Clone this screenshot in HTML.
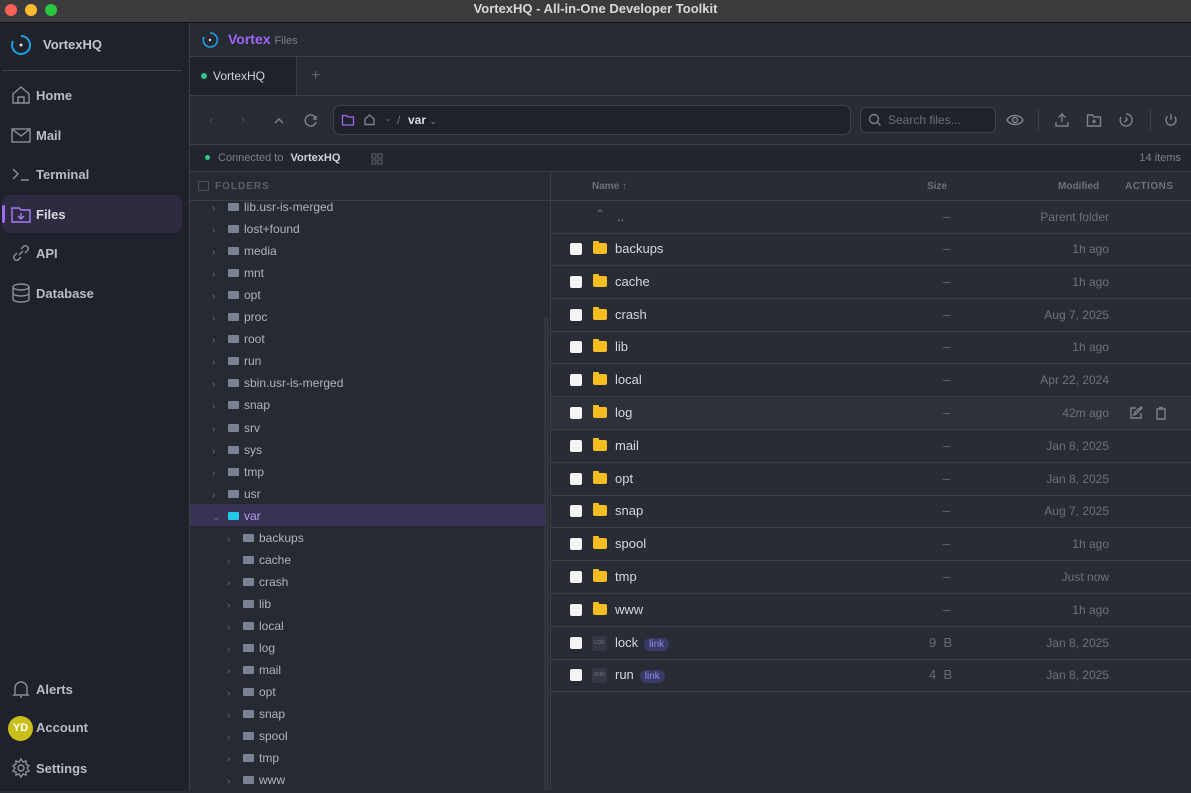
<!DOCTYPE html>
<html><head><meta charset="utf-8"><style>
*{box-sizing:border-box;margin:0;padding:0}
body{width:1191px;height:791px;overflow:hidden;background:#282c35;font-family:"Liberation Sans",sans-serif;color:#c9ccd3;position:relative;font-size:12px}
.a{position:absolute}
#tb{left:0;top:0;width:1191px;height:23px;background:#3b3b3d;border-bottom:1px solid #111;text-align:center;font-weight:bold;color:#d8d8d8;font-size:13px;line-height:18px}
.dot{position:absolute;top:4px;width:12px;height:12px;border-radius:50%}
#sb{left:0;top:23px;width:190px;height:768px;background:#1f222a;border-right:1px solid #3a3e48}
.nav{position:absolute;left:10px;font-weight:bold;font-size:13px;color:#b9bcc4;display:flex;align-items:center;gap:4px}
.nav svg{width:22px;height:22px;fill:none;stroke:#8c909a;stroke-width:1.4}
.tr{position:absolute;height:22px;line-height:22px;font-size:12px;color:#b0b4bc;white-space:nowrap}
.tr .c{display:inline-block;width:16px;color:#6b6f78;font-size:10px}
.tr .f{display:inline-block;width:11px;height:8px;background:#7a8294;border-radius:1px;margin-right:5px;vertical-align:-0px}
.row{position:absolute;left:551px;width:640px;height:33px;border-bottom:1px solid #3a3e48;font-size:13px}
.cb{position:absolute;left:19px;top:10px;width:12px;height:12px;background:#f4f4f4;border-radius:2px}
.fo{position:absolute;left:42px;top:10px;width:14px;height:11px;background:#f5bd1f;border-radius:2px}
.fo:before{content:"";position:absolute;left:0;top:-2px;width:6px;height:3px;background:#f5bd1f;border-radius:1px}
.nm{position:absolute;left:64px;top:8px;color:#d5d8de}
.sz{position:absolute;left:392px;top:8px;color:#666a73}
.md{position:absolute;right:82px;top:9px;color:#6d717a;font-size:12px}
.lk{display:inline-block;background:#3a3a66;color:#8b8ff0;font-size:10px;border-radius:8px;padding:1px 5px;margin-left:6px}
.ti{position:absolute;left:41px;top:9px;width:15px;height:15px;background:#343844;border-radius:2px;color:#777;font-size:5px;line-height:15px;text-align:center}
.ic{stroke:#7d818b;fill:none;stroke-width:1.4}
</style></head><body>
<div id="tb" class="a">VortexHQ - All-in-One Developer Toolkit
<div class="dot" style="left:5px;background:#fe5f57"></div><div class="dot" style="left:25px;background:#febc2e"></div><div class="dot" style="left:45px;background:#28c840"></div></div>

<div id="sb" class="a">
<svg class="a" style="left:10px;top:11px" width="22" height="22" viewBox="0 0 22 22"><path d="M11 2a9 9 0 1 1-8 5" stroke="#1ea0e0" stroke-width="2" fill="none"/><circle cx="11" cy="11" r="1.5" fill="#e0e0e0"/></svg>
<div class="a" style="left:43px;top:14px;font-weight:bold;font-size:13px;color:#c3c6cc">VortexHQ</div>
<div class="a" style="left:2px;top:47px;width:180px;height:1px;background:#3d414b"></div>
<div class="nav" style="top:61px"><svg viewBox="0 0 22 22"><path d="M3 10l8-7 8 7v9H3z M8 19v-6h6v6"/></svg>Home</div>
<div class="nav" style="top:101px"><svg viewBox="0 0 22 22"><rect x="2" y="5" width="18" height="13"/><path d="M2 5l9 7 9-7"/></svg>Mail</div>
<div class="nav" style="top:140px"><svg viewBox="0 0 22 22"><path d="M3 6l5 5-5 5M11 17h8"/></svg>Terminal</div>
<div class="a" style="left:2px;top:172px;width:180px;height:38px;background:#2e2a40;border-radius:8px"></div>
<div class="a" style="left:2px;top:182px;width:3px;height:18px;background:#9b6cf0;border-radius:2px"></div>
<div class="nav" style="top:180px;color:#d8d8e0"><svg viewBox="0 0 22 22" style="stroke:#a77cf5"><path d="M2 5h7l2 2h9v12H2z M11 10v6M8 13l3 3 3-3"/></svg>Files</div>
<div class="nav" style="top:219px"><svg viewBox="0 0 22 22"><path d="M9 13l4-4M7 11l-3 3a3 3 0 0 0 4 4l3-3M15 11l3-3a3 3 0 0 0-4-4l-3 3"/></svg>API</div>
<div class="nav" style="top:259px"><svg viewBox="0 0 22 22"><ellipse cx="11" cy="5" rx="8" ry="3"/><path d="M3 5v12c0 2 4 3 8 3s8-1 8-3V5M3 11c0 2 4 3 8 3s8-1 8-3"/></svg>Database</div>
<div class="nav" style="top:655px"><svg viewBox="0 0 22 22"><path d="M5 16V10a6 6 0 0 1 12 0v6l1 1H4zM10 19h2"/></svg>Alerts</div>
<div class="a" style="left:8px;top:693px;width:25px;height:25px;border-radius:50%;background:#c9be1a;color:#fff;font-weight:bold;font-size:11px;text-align:center;line-height:25px">YD</div>
<div class="nav" style="top:697px;left:36px">Account</div>
<div class="nav" style="top:734px"><svg viewBox="0 0 22 22"><circle cx="11" cy="11" r="3"/><path d="M11 2l2 3 3-1 0 3 3 2-2 2 2 3-3 1 0 3-3-1-2 3-2-3-3 1 0-3-3-1 2-3-2-2 3-2 0-3 3 1z"/></svg>Settings</div>
</div>

<div class="a" style="left:190px;top:23px;width:1001px;height:34px;background:#262a32;border-bottom:1px solid #3a3e48"></div>
<svg class="a" style="left:202px;top:32px" width="16" height="16" viewBox="0 0 16 16"><path d="M8 1a7 7 0 1 1-6 4" stroke="#1ea0e0" stroke-width="1.6" fill="none"/><circle cx="8" cy="8" r="1.2" fill="#ddd"/></svg>
<div class="a" style="left:228px;top:31px;font-weight:bold;font-size:14px;color:#a066f5">Vortex <span style="font-weight:normal;font-size:11px;color:#7c808a">Files</span></div>
<div class="a" style="left:190px;top:57px;width:1001px;height:39px;background:#262a32;border-bottom:1px solid #3a3e48"></div>
<div class="a" style="left:190px;top:57px;width:107px;height:38px;background:#1f222a;border-right:1px solid #3a3e48"></div>
<div class="a" style="left:201px;top:73px;width:6px;height:6px;border-radius:50%;background:#2ec98a"></div>
<div class="a" style="left:213px;top:69px;font-size:12px;color:#cfd2d8">VortexHQ</div>
<div class="a" style="left:311px;top:67px;font-size:16px;color:#5e626b">+</div>
<div class="a" style="left:190px;top:96px;width:1001px;height:49px;background:#282c35;border-bottom:1px solid #3a3e48"></div>
<div class="a" style="left:209px;top:112px;color:#4b4f58;font-size:13px">‹</div>
<div class="a" style="left:241px;top:112px;color:#4b4f58;font-size:13px">›</div>
<svg class="a" style="left:272px;top:114px" width="14" height="14"><path class="ic" d="M3 9l4-4 4 4"/></svg>
<svg class="a" style="left:303px;top:112px" width="16" height="16"><path class="ic" d="M13 4v3h-3M13 7a5.5 5.5 0 1 0 0 3"/></svg>
<div class="a" style="left:333px;top:105px;width:518px;height:30px;background:#1f222a;border:1px solid #3e424c;border-radius:7px"></div>
<svg class="a" style="left:341px;top:113px" width="14" height="14"><path d="M1.5 2.5h4l1.5 1.5h5.5v8h-11z" stroke="#a066f5" stroke-width="1.3" fill="none"/></svg>
<svg class="a" style="left:363px;top:113px" width="13" height="13"><path class="ic" d="M2 6l4.5-4 4.5 4v5.5H2z"/></svg>
<div class="a" style="left:384px;top:113px;color:#6b6f78;font-size:9px">⌄</div>
<div class="a" style="left:397px;top:113px;color:#6b6f78;font-size:12px">/</div>
<div class="a" style="left:408px;top:113px;color:#d8dbe0;font-size:12px;font-weight:bold">var <span style="font-size:9px;color:#888;font-weight:normal">⌄</span></div>
<div class="a" style="left:860px;top:107px;width:136px;height:26px;background:#1f222a;border:1px solid #3e424c;border-radius:6px"></div>
<svg class="a" style="left:868px;top:113px" width="14" height="14"><circle cx="6" cy="6" r="4.5" class="ic"/><path class="ic" d="M9.5 9.5l3 3"/></svg>
<div class="a" style="left:888px;top:113px;color:#6b6f78;font-size:12px">Search files...</div>
<svg class="a" style="left:1006px;top:113px" width="18" height="14"><path class="ic" d="M1 7c3-6 13-6 16 0-3 6-13 6-16 0z"/><circle cx="9" cy="7" r="2.5" class="ic"/></svg>
<div class="a" style="left:1038px;top:108px;width:1px;height:24px;background:#3a3e48"></div>
<svg class="a" style="left:1054px;top:112px" width="16" height="16"><path class="ic" d="M8 10V2M4.5 5.5L8 2l3.5 3.5M2 10v4h12v-4"/></svg>
<svg class="a" style="left:1086px;top:112px" width="16" height="16"><path class="ic" d="M1.5 3h5l1.5 2h6.5v9h-13zM8 7.5v4M6 9.5h4"/></svg>
<svg class="a" style="left:1118px;top:112px" width="16" height="16"><path class="ic" d="M8 2a6 6 0 1 1-5 3M8 5l1 3-3 2"/></svg>
<div class="a" style="left:1150px;top:108px;width:1px;height:24px;background:#3a3e48"></div>
<svg class="a" style="left:1163px;top:112px" width="16" height="16"><path class="ic" d="M8 2v6M4.5 4.5a5 5 0 1 0 7 0"/></svg>
<div class="a" style="left:190px;top:145px;width:1001px;height:27px;background:#22252d;border-bottom:1px solid #3a3e48"></div>
<div class="a" style="left:205px;top:155px;width:5px;height:5px;border-radius:50%;background:#2ec98a"></div>
<div class="a" style="left:218px;top:152px;font-size:11px;color:#7c808a">Connected to <span style="color:#d0d3d8;font-weight:bold;margin-left:4px">VortexHQ</span></div>
<svg class="a" style="left:371px;top:153px" width="12" height="12"><path d="M1 1h4v4H1zM7 1h4v4H7zM1 7h4v4H1zM7 7h4v4H7z" stroke="#5f636c" fill="none"/></svg>
<div class="a" style="right:10px;top:152px;font-size:11px;color:#7c808a">14 items</div>
<div class="a" style="left:190px;top:172px;width:361px;height:619px;background:#262a32;border-right:1px solid #3a3e48;overflow:hidden">
<div class="a" style="left:0;top:0;width:361px;height:29px;border-bottom:1px solid #3a3e48"></div>
<div class="a" style="left:8px;top:9px;width:11px;height:10px;border:1px solid #4e525b;border-radius:1px"></div>
<div class="a" style="left:25px;top:9px;font-size:10px;font-weight:bold;letter-spacing:1px;color:#5b5f68">FOLDERS</div>
<div class="a" style="left:354px;top:145px;width:5px;height:474px;background:#30343d"></div>
<div class="a" style="left:0;top:332px;width:356px;height:22px;background:#383352"></div>
</div>
<div id="tree"></div>
<div class="a" style="left:592px;top:181px;font-size:10px;font-weight:bold;color:#6d717a">Name ↑</div>
<div class="a" style="left:927px;top:181px;font-size:10px;font-weight:bold;color:#6d717a">Size</div>
<div class="a" style="left:1058px;top:181px;font-size:10px;font-weight:bold;color:#6d717a">Modified</div>
<div class="a" style="left:1125px;top:181px;font-size:10px;font-weight:bold;color:#6d717a;letter-spacing:.5px">ACTIONS</div>
<div class="a" style="left:551px;top:200px;width:640px;height:1px;background:#3a3e48"></div>
<div id="rows"></div>
<script>
var t=[["lib.usr-is-merged",0],["lost+found",0],["media",0],["mnt",0],["opt",0],["proc",0],["root",0],["run",0],["sbin.usr-is-merged",0],["snap",0],["srv",0],["sys",0],["tmp",0],["usr",0],["var",0,1],["backups",1],["cache",1],["crash",1],["lib",1],["local",1],["log",1],["mail",1],["opt",1],["snap",1],["spool",1],["tmp",1],["www",1]];
var h="";t.forEach(function(e,i){var y=196+i*22.05,x=212+e[1]*15;
h+='<div class="tr" style="left:'+x+'px;top:'+y+'px;'+(e[2]?'color:#b99cf5':'')+'"><span class="c">'+(e[2]?'⌄':'›')+'</span><span class="f" style="'+(e[2]?'background:#22c8e8':'')+'"></span>'+e[0]+'</div>';});
document.getElementById('tree').innerHTML=h;
var r=[["backups","1h ago"],["cache","1h ago"],["crash","Aug 7, 2025"],["lib","1h ago"],["local","Apr 22, 2024"],["log","42m ago",1],["mail","Jan 8, 2025"],["opt","Jan 8, 2025"],["snap","Aug 7, 2025"],["spool","1h ago"],["tmp","Just now"],["www","1h ago"],["lock","Jan 8, 2025","LOG","9 B"],["run","Jan 8, 2025","RUN","4 B"]];
var g='<div class="row" style="top:201px"><div class="a" style="left:44px;top:6px;color:#777;font-size:12px">⌃</div><div class="nm" style="left:66px;color:#999">..</div><div class="sz">–</div><div class="md">Parent folder</div></div>';
r.forEach(function(e,i){var y=233+i*32.8;
g+='<div class="row" style="top:'+y+'px;'+(e[2]===1?'background:#2d313a':'')+'"><div class="cb"></div>'+(typeof e[2]=="string"?'<div class="ti">'+e[2]+'</div><div class="nm">'+e[0]+'<span class="lk">link</span></div><div class="sz" style="left:378px">'+e[3].replace(' ','&nbsp;&nbsp;')+'</div>':'<div class="fo"></div><div class="nm">'+e[0]+'</div><div class="sz">–</div>')+'<div class="md">'+e[1]+'</div>'+(e[2]===1?'<svg class="a" style="left:578px;top:9px" width="14" height="14"><path class="ic" d="M7 2H2v10h10V7M5 9l1-3 6-5 1 1-6 6z"/></svg><svg class="a" style="left:603px;top:9px" width="14" height="14"><path class="ic" d="M3 3h8v10H3zM5 1.5h4"/></svg>':'')+'</div>';});
document.getElementById('rows').innerHTML=g;
</script>
</body></html>
